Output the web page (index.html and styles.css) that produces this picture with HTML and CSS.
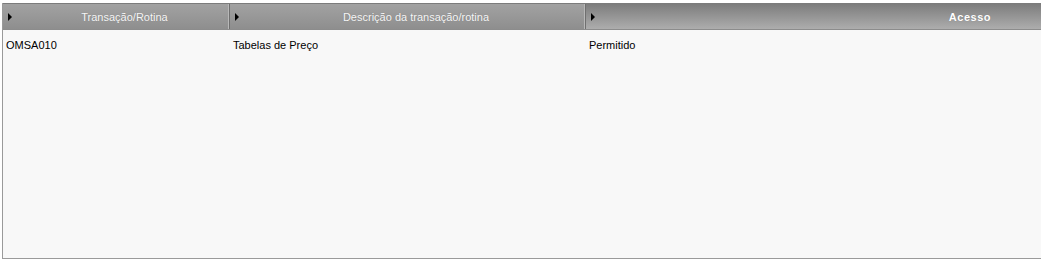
FILE: index.html
```html
<!DOCTYPE html>
<html lang="pt-BR">
<head>
    <meta charset="UTF-8">
    <title>Acessos</title>
    <link rel="stylesheet" href="styles.css">
</head>
<body>

    <div class="grid">
        <!-- Column headers -->
        <div class="grid-head">
            <div class="col col-cod"><span class="arrow"></span><span class="label">Transação/Rotina</span></div>
            <div class="col col-desc"><span class="arrow"></span><span class="label">Descrição da transação/rotina</span></div>
            <div class="col col-acc sorted"><span class="arrow"></span><span class="label">Acesso</span></div>
        </div>

        <!-- Rows -->
        <div class="grid-body">
            <div class="row">
                <div class="cell col-cod">OMSA010</div>
                <div class="cell col-desc">Tabelas de Preço</div>
                <div class="cell col-acc">Permitido</div>
            </div>
        </div>
    </div>

</body>
</html>
```

FILE: styles.css
```css
/* General reset */
* {
    margin: 0;
    padding: 0;
    box-sizing: border-box;
}

body {
    background-color: #ffffff;
    font-family: "Liberation Sans", Arial, sans-serif;
    font-size: 11px;
    color: #000;
    padding: 3px 0 0 2px;
}

/* Grid wrapper */
.grid {
    height: 256px;
    border-left: 1px solid #9a9a9a;
    border-bottom: 1px solid #9a9a9a;
    background-color: #f8f8f8;
    display: flex;
    flex-direction: column;
}

/* Header */
.grid-head {
    display: flex;
    height: 27px;
    border-top: 1px solid #7c7c7c;
    border-bottom: 1px solid #8c8c8c;
}
.grid-head .col {
    display: flex;
    align-items: center;
    padding-left: 5px;
    background: linear-gradient(#a2a2a2, #8e8e8e);
    border-right: 1px solid #6f6f6f;
    box-shadow: inset -1px 0 0 #b8b8b8;
    color: #f6f6f6;
}
.grid-head .col.sorted {
    background: linear-gradient(#7d7d7d, #adadad);
    border-right: none;
    box-shadow: none;
    color: #ffffff;
    font-weight: bold;
}
.grid-head .label {
    flex: 1;
    text-align: center;
    padding-left: 8px;
    text-shadow: 0 0 1px rgba(0, 0, 0, 0.2);
}
.grid-head .sorted .label {
    text-align: right;
    padding-right: 50px;
    letter-spacing: 0.5px;
}
.arrow {
    width: 0;
    height: 0;
    margin-top: 1px;
    border-top: 4px solid transparent;
    border-bottom: 4px solid transparent;
    border-left: 4px solid #000;
}

/* Column widths */
.col-cod {
    width: 227px;
}
.col-desc {
    width: 356px;
}
.col-acc {
    flex: 1;
}

/* Rows */
.grid-body {
    flex: 1;
    padding-top: 8px;
}
.row {
    display: flex;
    height: 14px;
    align-items: center;
}
.cell {
    padding-left: 3px;
}
```
